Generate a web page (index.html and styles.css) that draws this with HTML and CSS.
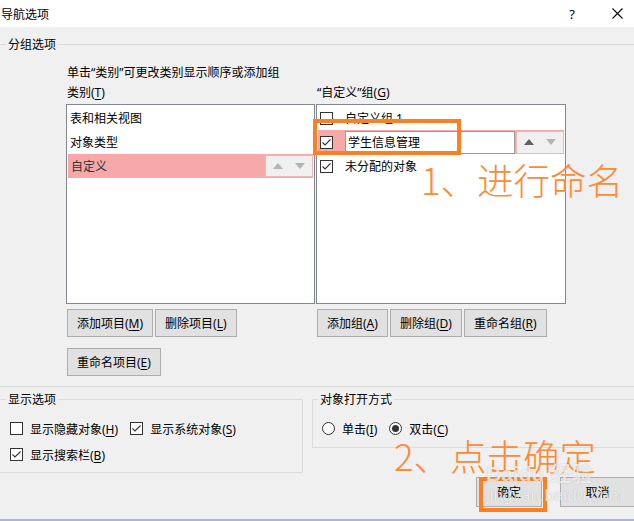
FILE: index.html
```html
<!DOCTYPE html>
<html lang="zh">
<head>
    <meta charset="UTF-8">
    <meta name="viewport" content="width=device-width, initial-scale=1.0">
    <title>导航选项</title>
    <link rel="stylesheet" href="styles.css">
</head>
<body>
    <div class="titlebar">
        <span class="title">导航选项</span>
        <span class="help">?</span>
        <svg class="close" width="11" height="11" viewBox="0 0 11 11"><path d="M0.5 0.5L10.5 10.5M10.5 0.5L0.5 10.5" stroke="#000" stroke-width="1.1" fill="none"/></svg>
    </div>

    <div class="group group-main">
        <div class="group-title">分组选项</div>
        <div class="group-body">
            <div class="hint">单击“类别”可更改类别显示顺序或添加组</div>
            <div class="cols">
                <div class="col-label">类别(<u>T</u>)</div>
                <div class="col-label">“自定义”组(<u>G</u>)</div>

                <div class="listbox">
                    <div class="row">表和相关视图</div>
                    <div class="row">对象类型</div>
                    <div class="row row-sel">
                        <span class="row-text">自定义</span>
                        <span class="spin"><i class="tri-up"></i><i class="tri-down"></i></span>
                    </div>
                </div>
                <div class="listbox">
                    <div class="row"><span class="cb"></span><span class="item-text">自定义组 1</span></div>
                    <div class="row row-sel row-edit">
                        <span class="cb"><svg width="11" height="11" viewBox="0 0 11 11"><path d="M1.5 5.5L4 8L9.5 2.5" stroke="#333" stroke-width="1.1" fill="none"/></svg></span>
                        <span class="edit">学生信息管理</span>
                        <span class="spin"><i class="tri-up dark"></i><i class="tri-down"></i></span>
                    </div>
                    <div class="row"><span class="cb"><svg width="11" height="11" viewBox="0 0 11 11"><path d="M1.5 5.5L4 8L9.5 2.5" stroke="#333" stroke-width="1.1" fill="none"/></svg></span><span class="item-text">未分配的对象</span></div>
                </div>

                <div class="btn-col">
                    <div class="btn-line">
                        <button class="btn">添加项目(<u>M</u>)</button>
                        <button class="btn">删除项目(<u>L</u>)</button>
                    </div>
                    <div class="btn-line">
                        <button class="btn">重命名项目(<u>E</u>)</button>
                    </div>
                </div>
                <div class="btn-col">
                    <div class="btn-line">
                        <button class="btn">添加组(<u>A</u>)</button>
                        <button class="btn">删除组(<u>D</u>)</button>
                        <button class="btn">重命名组(<u>R</u>)</button>
                    </div>
                </div>
            </div>
        </div>
    </div>

    <div class="options-row">
        <div class="group group-show">
            <div class="group-title">显示选项</div>
            <div class="opt-line">
                <span class="cb"></span><span class="opt-text">显示隐藏对象(<u>H</u>)</span>
                <span class="cb gap"><svg width="11" height="11" viewBox="0 0 11 11"><path d="M1.5 5.5L4 8L9.5 2.5" stroke="#333" stroke-width="1.1" fill="none"/></svg></span><span class="opt-text">显示系统对象(<u>S</u>)</span>
            </div>
            <div class="opt-line second">
                <span class="cb"><svg width="11" height="11" viewBox="0 0 11 11"><path d="M1.5 5.5L4 8L9.5 2.5" stroke="#333" stroke-width="1.1" fill="none"/></svg></span><span class="opt-text">显示搜索栏(<u>B</u>)</span>
            </div>
        </div>
        <div class="group group-open">
            <div class="group-title">对象打开方式</div>
            <div class="opt-line">
                <span class="radio"></span><span class="opt-text">单击(<u>I</u>)</span>
                <span class="radio gap on"></span><span class="opt-text">双击(<u>C</u>)</span>
            </div>
        </div>
    </div>

    <div class="dialog-btns">
        <button class="btn btn-big">确定</button>
        <button class="btn btn-big btn-cancel">取消</button>
    </div>

    <!-- 标注 -->
    <div class="mark mark-name"></div>
    <div class="mark mark-ok"></div>
    <div class="note note-1">1、进行命名</div>
    <div class="note note-2">2、点击确定</div>
    <div class="watermark">
        <div class="wm-logo">Bai<span class="paw">du</span> 经验</div>
        <div class="wm-url">jingyan.baidu.com</div>
    </div>
</body>
</html>
```

FILE: styles.css
```css
* {
    box-sizing: border-box;
}
body {
    margin: 0;
    width: 634px;
    height: 521px;
    overflow: hidden;
    position: relative;
    background: #f0f0f0;
    border-bottom: 2px solid #b0b2de;
    font-family: "Noto Sans", "Noto Sans CJK SC", sans-serif;
    font-size: 12px;
    color: #000;
}
u {
    text-decoration-thickness: 1px;
    text-underline-offset: 2px;
}

/* 标题栏 */
.titlebar {
    height: 27px;
    background: #fff;
    display: flex;
    align-items: center;
}
.title {
    flex: 1;
    padding-left: 1px;
}
.help {
    width: 8px;
    margin-right: 36px;
    font-size: 13px;
    text-align: center;
}
.close {
    margin-right: 11px;
}

/* 分组框 */
.group {
    border: 1px solid #dcdcdc;
}
.group-title {
    width: max-content;
    margin: -9px 0 0 7px;
    padding: 0 2px;
    background: #f0f0f0;
    line-height: 17px;
}
.group-main {
    margin: 17px -2px 0 -2px;
}
.group-body {
    padding: 0 0 10px 67px;
}
.hint {
    margin-top: 11px;
    line-height: 17px;
    padding-left: 1px;
}
.cols {
    display: grid;
    grid-template-columns: 249px 250px;
    column-gap: 1px;
}
.col-label {
    margin-top: 3px;
    line-height: 17px;
    padding-left: 1px;
}

/* 列表 */
.listbox {
    margin-top: 3px;
    height: 200px;
    border: 1px solid #828790;
    background: #fff;
    padding-top: 1px;
}
.row {
    height: 24px;
    display: flex;
    align-items: center;
    padding-left: 3px;
}
.row-sel {
    margin: 0 1px;
    background: #f7a8a8;
}
.row-sel .row-text {
    color: #333;
}
.row-edit {
    padding-left: 2px;
}
.item-text {
    margin-left: 12px;
}
.edit {
    margin-left: 12px;
    width: 170px;
    height: 23px;
    line-height: 21px;
    padding-left: 2px;
    background: #fff;
    border: 1px solid #9a9a9a;
}
.spin {
    margin-left: auto;
    width: 48px;
    height: 22px;
    display: flex;
    align-items: center;
    justify-content: space-between;
    padding: 0 7px;
    background: #f0f0f0;
    border: 1px solid #f4b4b4;
}
.row-edit .spin {
    margin-left: 1px;
    height: 23px;
}
.tri-up,
.tri-down {
    width: 0;
    height: 0;
    border-left: 5px solid transparent;
    border-right: 5px solid transparent;
}
.tri-up {
    border-bottom: 6px solid #b4b4b4;
}
.tri-down {
    border-top: 6px solid #b4b4b4;
}
.tri-up.dark {
    border-bottom-color: #606060;
}

/* 复选框 / 单选框 */
.cb {
    width: 13px;
    height: 13px;
    flex: none;
    border: 1px solid #333;
    background: #fff;
    display: flex;
}
.radio {
    width: 13px;
    height: 13px;
    flex: none;
    border: 1px solid #333;
    border-radius: 50%;
    background: #fff;
    display: flex;
    align-items: center;
    justify-content: center;
}
.radio.on::after {
    content: "";
    width: 7px;
    height: 7px;
    border-radius: 50%;
    background: #333;
}

/* 按钮 */
.btn {
    height: 28px;
    padding: 0 9px;
    font-family: inherit;
    font-size: 12px;
    color: #000;
    background: #e1e1e1;
    border: 1px solid #adadad;
}
.btn-col {
    margin-top: 5px;
    padding-left: 1px;
}
.btn-line {
    display: flex;
    gap: 2px;
}
.btn-line + .btn-line {
    margin-top: 11px;
}

/* 显示选项 / 打开方式 */
.options-row {
    display: flex;
    align-items: flex-start;
    margin-top: 12px;
}
.group-show {
    width: 305px;
    height: 74px;
    margin-left: -2px;
}
.group-open {
    flex: 1;
    height: 49px;
    margin: 0 -4px 0 9px;
}
.group-open .group-title {
    margin-left: 5px;
}
.opt-line {
    display: flex;
    align-items: center;
    height: 17px;
    margin-top: 12px;
    padding-left: 11px;
}
.group-open .opt-line {
    padding-left: 9px;
}
.opt-line.second {
    margin-top: 9px;
}
.opt-text {
    margin-left: 7px;
}
.gap {
    margin-left: 12px;
}

.dialog-btns {
    display: flex;
    justify-content: flex-end;
    gap: 18px;
    margin: 4px -1px 0 0;
}
.btn-big {
    height: 30px;
    width: 66px;
}
.btn-cancel {
    width: 75px;
}

/* 橙色标注 */
.mark {
    position: absolute;
    border: 4px solid #fd7f24;
}
.mark-name {
    left: 313px;
    top: 119px;
    width: 148px;
    height: 36px;
}
.mark-ok {
    left: 479px;
    top: 477px;
    width: 68px;
    height: 35px;
}
.note {
    position: absolute;
    font-family: "Noto Sans CJK SC", sans-serif;
    font-size: 36.5px;
    font-weight: 300;
    line-height: 36px;
    color: #fd8a36;
    white-space: nowrap;
}
.note-1 {
    left: 421px;
    top: 162px;
}
.note-2 {
    left: 394px;
    top: 438px;
}
.watermark {
    position: absolute;
    left: 486px;
    top: 462px;
    color: rgba(255, 255, 255, 0.75);
    text-shadow: 0 0 1px rgba(0, 0, 0, 0.25);
    font-family: "Liberation Sans", "Noto Sans CJK SC", sans-serif;
    pointer-events: none;
}
.wm-logo {
    font-size: 21px;
    font-weight: bold;
    line-height: 24px;
}
.wm-url {
    font-size: 17px;
    line-height: 20px;
}
```
